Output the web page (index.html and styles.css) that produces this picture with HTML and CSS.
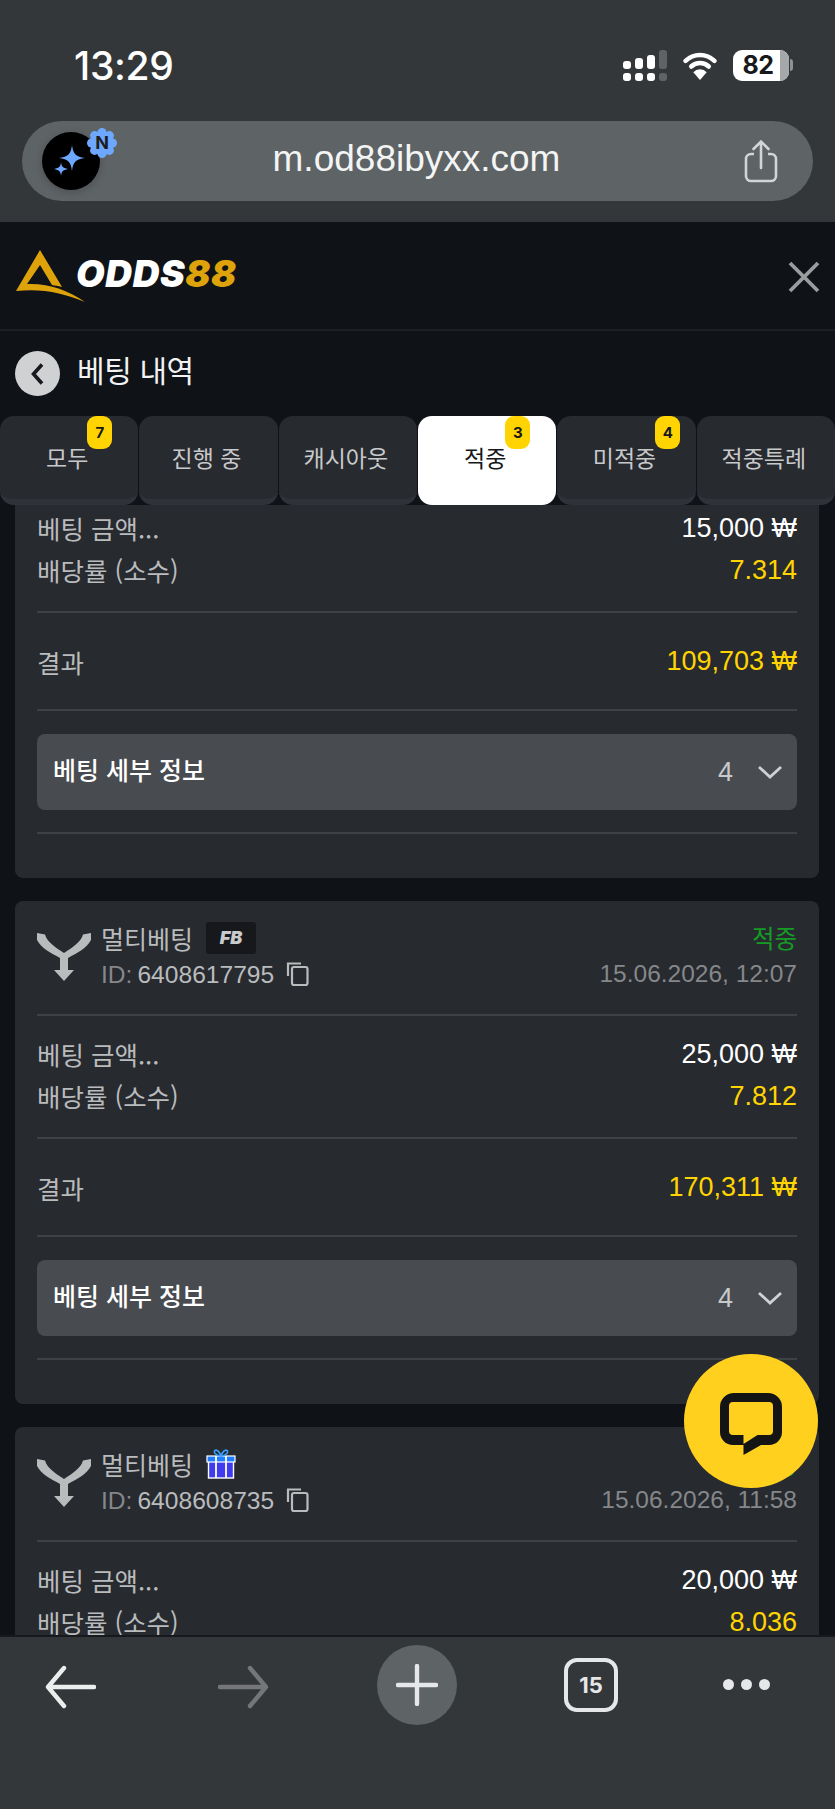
FILE: index.html
```html
<!DOCTYPE html>
<html lang="ko">
<head>
<meta charset="utf-8">
<title>ODDS88</title>
<link rel="stylesheet" href="styles.css">
</head>
<body>
<div class="app">
  <header class="chrome-top">
    <div class="status">
      <span class="time">13:29</span>
      <div class="status-icons">
        <svg class="signal" width="44" height="31" viewBox="0 0 44 31"><g fill="#fff"><rect x="0" y="11" width="8" height="8" rx="3"/><rect x="12" y="8" width="8" height="11" rx="3"/><rect x="24" y="5" width="8" height="14" rx="3"/><rect x="0" y="23" width="8" height="8" rx="3"/><rect x="12" y="23" width="8" height="8" rx="3"/><rect x="24" y="23" width="8" height="8" rx="3"/></g><g fill="#5f6366"><rect x="36" y="0" width="8" height="19" rx="3"/><rect x="36" y="23" width="8" height="8" rx="3"/></g></svg>
        <svg class="wifi" width="36" height="31" viewBox="0 0 34 30"><path d="M3 10.500a20 20 0 0 1 28 0M8.500 16a12.500 12.500 0 0 1 17 0" fill="none" stroke="#fff" stroke-width="4.400" stroke-linecap="round"/><path d="M10.500 21.500a9 9 0 0 1 13 0L17 29z" fill="#fff"/></svg>
        <div class="battery"><span class="battery-num">82</span><span class="battery-rest"></span></div>
        <span class="battery-cap"></span>
      </div>
    </div>
    <div class="urlbar">
      <div class="avatar">
        <svg width="58" height="58" viewBox="0 0 58 58"><path d="M30 13C31 22 34 25 43 26 34 27 31 30 30 39 29 30 26 27 17 26 26 25 29 22 30 13ZM19 30C19.500 34.500 20.500 36 26 37 20.500 38 19.500 39.500 19 44 18.500 39.500 17.500 38 12 37 17.500 36 18.500 34.500 19 30Z" fill="#6ea8fe"/></svg>
        <span class="n-badge">
          <svg width="30" height="30" viewBox="0 0 30 30"><g fill="#6ea8fe"><circle cx="15" cy="15" r="12"/><circle cx="15" cy="4.500" r="4.500"/><circle cx="22.400" cy="7.600" r="4.500"/><circle cx="25.500" cy="15" r="4.500"/><circle cx="22.400" cy="22.400" r="4.500"/><circle cx="15" cy="25.500" r="4.500"/><circle cx="7.600" cy="22.400" r="4.500"/><circle cx="4.500" cy="15" r="4.500"/><circle cx="7.600" cy="7.600" r="4.500"/></g></svg>
          <span class="n-letter">N</span>
        </span>
      </div>
      <span class="url">m.od88ibyxx.com</span>
      <svg class="share" width="38" height="44" viewBox="0 0 38 44"><path d="M12 15H9a5 5 0 0 0-5 5v17a5 5 0 0 0 5 5h20a5 5 0 0 0 5-5V20a5 5 0 0 0-5-5h-3" fill="none" stroke="#d2d4d5" stroke-width="2.600"/><path d="M19 29V3M11.500 10 19 2.500 26.500 10" fill="none" stroke="#d2d4d5" stroke-width="2.600" stroke-linecap="round"/></svg>
    </div>
  </header>

  <main class="page">
    <div class="site-header">
      <div class="logo">
        <svg class="logo-mark" width="72" height="56" viewBox="0 0 72 56"><path d="M24 0 46 37C42 36 39 35.500 36 35L24 15 11 34C32 33 52 40 69 52 48 43 25 38 0 41Z" fill="#dea30b"/></svg>
        <span class="logo-text">ODDS<em>88</em></span>
      </div>
      <svg class="close" width="32" height="32" viewBox="0 0 32 32"><path d="M2 2 30 30M30 2 2 30" stroke="#9a9c9e" stroke-width="3.800"/></svg>
    </div>

    <div class="back-row">
      <span class="back-btn"><svg width="16" height="24" viewBox="0 0 16 24"><path d="M12 2.500 3.500 12l8.500 9.500" fill="none" stroke="#15181c" stroke-width="3.600"/></svg></span>
      <h1 class="title">베팅 내역</h1>
    </div>

    <nav class="tabs">
      <a class="tab"><span class="tab-label">모두<b class="count">7</b></span></a>
      <a class="tab"><span class="tab-label">진행 중</span></a>
      <a class="tab"><span class="tab-label">캐시아웃</span></a>
      <a class="tab active"><span class="tab-label">적중<b class="count">3</b></span></a>
      <a class="tab"><span class="tab-label">미적중<b class="count">4</b></span></a>
      <a class="tab"><span class="tab-label">적중특례</span></a>
    </nav>

    <div class="list">
      <div class="track">
        <article class="card">
          <div class="card-head"></div>
          <div class="amounts">
            <div class="row"><span>베팅 금액...</span><span class="white">15,000 ₩</span></div>
            <div class="row"><span>배당률 (소수)</span><span class="gold">7.314</span></div>
          </div>
          <div class="result"><span>결과</span><span class="gold">109,703 ₩</span></div>
          <div class="details"><span class="details-title">베팅 세부 정보</span><span class="details-right"><span>4</span><svg width="26" height="14" viewBox="0 0 26 14"><path d="M2 2 13 12 24 2" fill="none" stroke="#d0d1d3" stroke-width="2.800"/></svg></span></div>
          <div class="end-rule"></div>
        </article>

        <article class="card">
          <div class="card-head">
            <svg class="multi" width="54" height="49" viewBox="0 0 54 49"><path d="M0 0 8 1.500C10 9 18 14 27 20 36 14 44 9 46 1.500L54 0V7C50 15 40 20 31 25V37H37L27 48 17 37H23V25C14 20 4 15 0 7Z" fill="#b9bbbd"/></svg>
            <div class="head-text">
              <div class="name-row"><span class="name">멀티베팅</span><span class="fb">FB</span></div>
              <div class="id-row"><span class="id-label">ID:</span><span class="id">6408617795</span>
                <svg class="copy" width="24" height="26" viewBox="0 0 24 26"><path d="M2 15V2.500h13" fill="none" stroke="#b9bbbd" stroke-width="2.200"/><rect x="6" y="6" width="15.500" height="18" rx="2" fill="none" stroke="#b9bbbd" stroke-width="2.200"/></svg>
              </div>
            </div>
            <div class="head-right"><span class="won">적중</span><span class="date">15.06.2026, 12:07</span></div>
          </div>
          <div class="amounts">
            <div class="row"><span>베팅 금액...</span><span class="white">25,000 ₩</span></div>
            <div class="row"><span>배당률 (소수)</span><span class="gold">7.812</span></div>
          </div>
          <div class="result"><span>결과</span><span class="gold">170,311 ₩</span></div>
          <div class="details"><span class="details-title">베팅 세부 정보</span><span class="details-right"><span>4</span><svg width="26" height="14" viewBox="0 0 26 14"><path d="M2 2 13 12 24 2" fill="none" stroke="#d0d1d3" stroke-width="2.800"/></svg></span></div>
          <div class="end-rule"></div>
        </article>

        <article class="card">
          <div class="card-head">
            <svg class="multi" width="54" height="49" viewBox="0 0 54 49"><path d="M0 0 8 1.500C10 9 18 14 27 20 36 14 44 9 46 1.500L54 0V7C50 15 40 20 31 25V37H37L27 48 17 37H23V25C14 20 4 15 0 7Z" fill="#b9bbbd"/></svg>
            <div class="head-text">
              <div class="name-row"><span class="name">멀티베팅</span>
                <svg class="gift" width="30" height="30" viewBox="0 0 30 30"><rect x="2.500" y="12" width="25" height="17" fill="#3f3cf0" stroke="#fff" stroke-width="1.400"/><rect x="1" y="7" width="28" height="6" fill="#1f7bff" stroke="#fff" stroke-width="1.200"/><path d="M10 7v22M20 7v22" stroke="#fff" stroke-width="1.800"/><path d="M15 7C10 7 7 3 9 1.500s5 2 6 5.500c1-3.500 4-7 6-5.500S20 7 15 7z" fill="none" stroke="#3aa0ff" stroke-width="1.600"/></svg>
              </div>
              <div class="id-row"><span class="id-label">ID:</span><span class="id">6408608735</span>
                <svg class="copy" width="24" height="26" viewBox="0 0 24 26"><path d="M2 15V2.500h13" fill="none" stroke="#b9bbbd" stroke-width="2.200"/><rect x="6" y="6" width="15.500" height="18" rx="2" fill="none" stroke="#b9bbbd" stroke-width="2.200"/></svg>
              </div>
            </div>
            <div class="head-right"><span class="won">적중</span><span class="date">15.06.2026, 11:58</span></div>
          </div>
          <div class="amounts">
            <div class="row"><span>베팅 금액...</span><span class="white">20,000 ₩</span></div>
            <div class="row"><span>배당률 (소수)</span><span class="gold">8.036</span></div>
          </div>
        </article>
      </div>
      <button class="chat" type="button" aria-label="chat">
        <svg width="62" height="62" viewBox="0 0 62 62"><path d="M14 0H48A14 14 0 0 1 62 14V39A13 13 0 0 1 49 52H41L23.500 62V52H13A13 13 0 0 1 0 39V14A14 14 0 0 1 14 0Z" fill="#141414"/><path d="M13 9H49A4 4 0 0 1 53 13V38A4 4 0 0 1 49 42H37.500L23.500 51V42H13A4 4 0 0 1 9 38V13A4 4 0 0 1 13 9Z" fill="#ffd11e"/></svg>
      </button>
    </div>
  </main>

  <footer class="chrome-bottom">
    <svg width="52" height="44" viewBox="0 0 52 44"><path d="M50 22H4M20 3 4 22l16 19" fill="none" stroke="#eceded" stroke-width="4.400" stroke-linecap="round" stroke-linejoin="round"/></svg>
    <svg class="forward" width="52" height="44" viewBox="0 0 52 44"><path d="M2 22h46M32 3l16 19-16 19" fill="none" stroke="#747678" stroke-width="4.400" stroke-linecap="round" stroke-linejoin="round"/></svg>
    <span class="plus"><svg width="42" height="42" viewBox="0 0 42 42"><path d="M21 2v38M2 21h38" stroke="#e6e7e8" stroke-width="4.400" stroke-linecap="round"/></svg></span>
    <span class="tabs-count">15</span>
    <span class="dots"><i></i><i></i><i></i></span>
  </footer>
</div>
</body>
</html>
```

FILE: styles.css
```css
* { box-sizing: border-box; }
html, body { margin: 0; padding: 0; background: #0f1318; }
body { font-family: "Liberation Sans", "Noto Sans CJK KR", sans-serif; }
.app { width: 835px; height: 1809px; display: flex; flex-direction: column; overflow: hidden; }

.chrome-top { height: 222px; background: #34373a; flex: none; }
.status { height: 121px; padding: 47px 42px 0 74px; display: flex; justify-content: space-between; }
.time { font: 500 39px/38px Inter, "Liberation Sans", sans-serif; color: #fff; letter-spacing: -.3px; }
.status-icons { display: flex; align-items: flex-start; padding-top: 3px; }
.signal { margin-right: 15px; }
.wifi { margin-right: 15px; }
.battery { width: 56px; height: 31px; border-radius: 9px; background: #fff; display: flex; overflow: hidden; }
.battery-num { flex: 1; font: 700 25px/31px Inter, "Liberation Sans", sans-serif; color: #17191b; text-align: center; padding-left: 3px; letter-spacing: -.5px; }
.battery-rest { width: 9px; background: #a6a7a9; }
.battery-cap { width: 3px; height: 12px; margin: 9px 0 0 1px; border-radius: 0 3px 3px 0; background: #8e9092; }
.urlbar { margin: 0 22px; height: 80px; border-radius: 40px; background: #5e6366; display: flex; align-items: center; padding: 0 33px 0 20px; }
.avatar { width: 58px; height: 58px; border-radius: 50%; background: #000; position: relative; box-shadow: 0 2px 8px rgba(0,0,0,.2); flex: none; }
.avatar svg { display: block; }
.n-badge { position: absolute; left: 45px; top: -4px; width: 30px; height: 30px; }
.n-letter { position: absolute; inset: 0; color: #1b1d20; font: 700 18px/30px Inter, sans-serif; text-align: center; }
.url { flex: 1; text-align: center; color: #f3f4f4; font: 400 37px/40px "Liberation Sans", sans-serif; padding: 0 9px 4px 0; }
.share { flex: none; }

.page { height: 1413px; flex: none; background: #0f1318; display: flex; flex-direction: column; }
.site-header { height: 109px; flex: none; border-bottom: 2px solid #1c1f24; display: flex; align-items: flex-start; justify-content: space-between; padding: 28px 15px 0 16px; }
.logo { display: flex; align-items: flex-start; }
.logo-mark { flex: none; }
.logo-text { margin: 5px 0 0 -12px; font: italic 900 37px/38px Inter, "Liberation Sans", sans-serif; color: #fff; letter-spacing: .6px; }
.logo-text em { color: #dea30b; font-style: italic; }
.close { display: block; margin-top: 11px; }
.back-row { height: 85px; flex: none; display: flex; align-items: center; padding: 0 0 0 15px; gap: 17px; }
.back-btn { width: 45px; height: 45px; border-radius: 50%; background: #d0d1d3; display: flex; align-items: center; justify-content: center; }
.title { margin: 0; padding-bottom: 9px; font: 400 30px/36px "Noto Sans CJK KR", sans-serif; color: #f2f2f2; letter-spacing: -.4px; }

.tabs { height: 89px; flex: none; display: flex; gap: 1px; position: relative; z-index: 2; background: #0f1318; }
.tab { flex: 1; position: relative; display: flex; align-items: center; justify-content: center; padding: 0 4px 2px 0; background: #272a2f; border-radius: 14px; border-bottom: 6px solid #2f3238; color: #c8c9cb; font: 400 23px/28px "Noto Sans CJK KR", sans-serif; }
.tab.active { background: #fff; color: #15171a; border-bottom: 0; padding-bottom: 8px; }
.tab-label { position: relative; }
.count { position: absolute; left: calc(100% - 1px); top: -27px; width: 25px; height: 33px; border-radius: 9px; background: #ffd400; color: #15171a; font: 700 15px/33px Inter, sans-serif; text-align: center; }

.list { flex: 1; min-height: 0; position: relative; overflow: hidden; }
.track { margin-top: -130px; display: flex; flex-direction: column; gap: 23px; padding: 0 16px 0 15px; }
.card { height: 503px; flex: none; background: #272a2f; border-radius: 8px; padding: 0 22px; }
.card-head { height: 115px; display: flex; border-bottom: 2px solid #3e4146; padding-top: 21px; }
.multi { flex: none; margin-top: 11px; }
.head-text { margin-left: 10px; flex: 1; }
.name-row { display: flex; align-items: center; gap: 13px; height: 32px; }
.name { font: 400 25px/30px "Noto Sans CJK KR", sans-serif; color: #b9bbbd; }
.fb { width: 50px; height: 32px; background: #16181b; border-radius: 3px; color: #c9cacb; font: italic 900 18px/32px Inter, sans-serif; text-align: center; }
.id-row { display: flex; align-items: center; height: 38px; font-size: 24.600px; color: #b9bbbd; margin-top: 2px; }
.id-label { color: #85878a; margin-right: 5px; }
.copy { margin-left: 12px; margin-top: -3px; }
.head-right { display: flex; flex-direction: column; align-items: flex-end; }
.won { color: #169a26; font: 400 24.500px/32px "Noto Sans CJK KR", sans-serif; }
.date { color: #85878a; font-size: 24.500px; line-height: 32px; margin-top: 4px; }

.amounts { height: 123px; padding-top: 17px; border-bottom: 2px solid #3e4146; }
.row { height: 42px; display: flex; justify-content: space-between; align-items: center; }
.row span:first-child, .result span:first-child { font: 400 25.500px/32px "Noto Sans CJK KR", "Liberation Sans", sans-serif; color: #b9bbbd; }
.white, .gold { font-size: 27px; line-height: 32px; }
.white { color: #fff; }
.gold { color: #ffd400; }
.result { height: 98px; display: flex; justify-content: space-between; align-items: flex-start; padding-top: 33px; border-bottom: 2px solid #3e4146; }
.result .gold { margin-top: -1px; }
.details { margin-top: 23px; height: 76px; border-radius: 8px; background: #484b50; display: flex; justify-content: space-between; align-items: center; padding: 0 14px 6px 16px; }
.details-title { font: 500 25px/30px "Noto Sans CJK KR", sans-serif; color: #fff; }
.details-right { display: flex; align-items: center; gap: 24px; color: #c8c9cb; font-size: 27px; padding-top: 6px; }
.end-rule { margin-top: 22px; height: 2px; background: #3e4146; }

.chat { position: absolute; left: 684px; top: 849px; width: 134px; height: 134px; border: 0; padding: 0; border-radius: 50%; background: #ffd11e; display: flex; align-items: center; justify-content: center; }
.chat svg { display: block; margin-top: 6px; }

.chrome-bottom { flex: 1; background: #34373a; border-top: 2px solid #17191c; display: flex; align-items: flex-start; padding: 8px 0 0 44px; }
.chrome-bottom > svg { flex: none; margin-top: 20px; }
.chrome-bottom > .forward { margin-left: 122px; }
.plus { width: 80px; height: 80px; border-radius: 50%; background: #5e6366; margin-left: 107px; display: flex; align-items: center; justify-content: center; flex: none; }
.tabs-count { width: 54px; height: 54px; margin: 13px 0 0 107px; border: 4px solid #e6e7e8; border-radius: 13px; color: #e6e7e8; font: 700 22px/46px Inter, sans-serif; text-align: center; flex: none; }
.dots { display: flex; gap: 7px; margin: 34px 0 0 105px; }
.dots i { width: 11px; height: 11px; border-radius: 50%; background: #e6e7e8; }
```
